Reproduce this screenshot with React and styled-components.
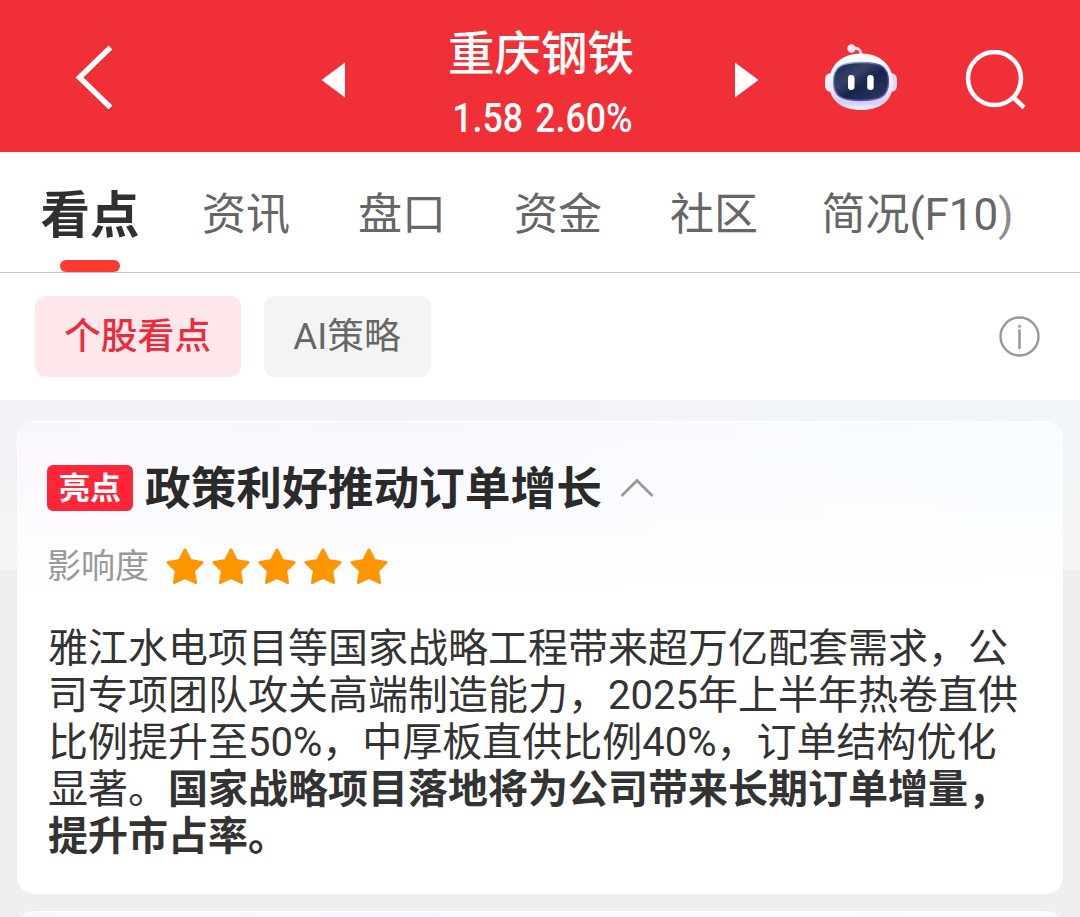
import React from "react";
import styled, { createGlobalStyle } from "styled-components";

const GlobalStyle = createGlobalStyle`
  * { box-sizing: border-box; }
  html, body { margin: 0; padding: 0; }
  body {
    width: 1080px;
    height: 917px;
    overflow: hidden;
    background: #efefef;
    font-family: Roboto, "Noto Sans CJK SC", sans-serif;
    color: #333;
  }
  svg { display: block; flex: none; }
`;

const Page = styled.div`
  width: 1080px;
  height: 917px;
  display: flex;
  flex-direction: column;
  overflow: hidden;
`;

const Header = styled.header`
  height: 152px;
  flex: none;
  display: grid;
  grid-template-columns: 321px 87px 266px 150px 141px 115px;
  background: #f12f37;
  color: #fff;
`;

const HeaderCell = styled.div`
  padding: ${(p) => p.$pad};
`;

const StockTitle = styled.div`
  display: flex;
  flex-direction: column;
  align-items: center;
  padding-top: 24px;
`;

const StockName = styled.div`
  font-size: 46.5px;
  line-height: 60px;
  font-weight: 500;
  white-space: nowrap;
`;

const StockQuote = styled.div`
  font-size: 40.5px;
  line-height: 48px;
  margin: 10px 0 0 2px;
  font-weight: 500;
  word-spacing: 4px;
  white-space: nowrap;
  transform: scaleX(0.88);
`;

const Percent = styled.span`
  font-size: 41px;
  font-weight: 500;
`;

const Tabs = styled.nav`
  height: 121px;
  flex: none;
  display: flex;
  padding-left: 40px;
  background: #fff;
  border-bottom: 1px solid #c8c8c8;
`;

const Tab = styled.div`
  display: flex;
  flex-direction: column;
  align-items: center;
  width: ${(p) => p.$width}px;
  margin-right: ${(p) => p.$gap}px;
  padding-top: ${(p) => (p.$active ? 34 : 33)}px;
  font-size: ${(p) => (p.$active ? 49.5 : 44)}px;
  font-weight: ${(p) => (p.$active ? 700 : 400)};
  line-height: 60px;
  color: ${(p) => (p.$active ? "#303030" : "#666")};
  white-space: nowrap;
`;

const Indicator = styled.span`
  width: 60px;
  height: 12px;
  margin-top: 14px;
  border-radius: 6px;
  background: #fb3a30;
`;

const FadedEnd = styled.span`
  color: #8c8c8c;
`;

const Filters = styled.div`
  height: 127px;
  flex: none;
  display: flex;
  align-items: flex-start;
  padding: 23px 40px 0 35px;
  background: #fff;
`;

const Chip = styled.div`
  width: ${(p) => p.$width}px;
  height: 81px;
  margin-right: 23px;
  padding-right: 1px;
  border-radius: 11px;
  font-size: 36.8px;
  line-height: 81px;
  text-align: center;
  white-space: nowrap;
  font-weight: ${(p) => (p.$active ? 500 : 400)};
  color: ${(p) => (p.$active ? "#ea2c3d" : "#666")};
  background: ${(p) => (p.$active ? "#ffe8eb" : "#f4f4f4")};
`;

const InfoButton = styled.div`
  margin: 20px 0 0 auto;
`;

const Feed = styled.main`
  flex: 1;
  padding: 21px 17px 0;
  background: linear-gradient(to bottom, rgba(239, 239, 239, 0), #f3f4f4 169px, #efefef 169px),
    linear-gradient(to right, #f2f2f8, #f2f3f8 50%, #f1f6f9);
`;

const Card = styled.article`
  height: 473px;
  margin-bottom: 17px;
  padding: 43px 30px 0;
  border: 1px solid #fff;
  border-radius: 17px;
  background: linear-gradient(to bottom, rgba(255, 255, 255, 0), #fff 180px),
    linear-gradient(to right, #fbf6fe, #f6f8ff 38%, #f8faff 65%, #f6fcff);
`;

const CardHead = styled.div`
  display: flex;
  align-items: center;
  height: 46px;
  margin-left: -1px;
`;

const Badge = styled.span`
  width: 86px;
  height: 46px;
  border-radius: 6px;
  background: #ff2639;
  color: #fff;
  font-size: 31px;
  font-weight: 700;
  line-height: 48px;
  text-align: center;
`;

const CardTitle = styled.h2`
  margin: 0 18px 0 12px;
  font-size: 45.7px;
  line-height: 46px;
  padding-top: 3px;
  font-weight: 700;
  color: #2a2a2a;
  white-space: nowrap;
`;

const Impact = styled.div`
  display: flex;
  align-items: center;
  height: 40px;
  margin: 35px 0 0 -1px;
`;

const ImpactLabel = styled.span`
  width: 119px;
  font-size: 34px;
  line-height: 40px;
  color: #999;
`;

const Stars = styled.div`
  display: flex;
  gap: 8px;
`;

const Body = styled.p`
  margin: 39px 0 0;
  font-size: 40px;
  line-height: 47px;
  color: #333;
  white-space: nowrap;
`;

const Line = styled.span`
  display: block;
`;

const BackIcon = () => (
  <svg width="40" height="68" viewBox="0 0 40 68" fill="none">
    <path d="M36.500 5 6 35l30.500 30.500" stroke="#8d1d24" strokeOpacity=".35" strokeWidth="5" />
    <path d="M36.500 3.500 5.500 33.500l31 30" stroke="#fff" strokeWidth="5.500" />
  </svg>
);

const PrevIcon = () => (
  <svg width="25" height="36" viewBox="0 0 25 36"><path d="M24 .5v35L.5 18z" fill="#fff" /></svg>
);

const NextIcon = () => (
  <svg width="25" height="36" viewBox="0 0 25 36"><path d="M1 .5v35L24.500 18z" fill="#fff" /></svg>
);

const RobotIcon = () => (
  <svg width="74" height="68" viewBox="0 0 74 68">
    <defs>
      <linearGradient id="shell" x1="0" y1="0" x2="0" y2="1">
        <stop offset="0" stopColor="#fff" />
        <stop offset=".55" stopColor="#efedfb" />
        <stop offset=".88" stopColor="#d3d1f2" />
        <stop offset="1" stopColor="#faf6fd" />
      </linearGradient>
      <linearGradient id="rim" x1="0" y1="0" x2="1" y2="1">
        <stop offset="0" stopColor="#8be0ee" />
        <stop offset=".45" stopColor="#6b4fc4" />
        <stop offset=".75" stopColor="#5a50d0" />
        <stop offset="1" stopColor="#b45ce0" />
      </linearGradient>
      <linearGradient id="face" x1="0" y1="0" x2="1" y2="1">
        <stop offset="0" stopColor="#1d2850" />
        <stop offset=".35" stopColor="#364165" />
        <stop offset=".55" stopColor="#18244b" />
        <stop offset="1" stopColor="#303b65" />
      </linearGradient>
    </defs>
    <path d="M28 4.500c6-1 9 1 9.200 7" fill="none" stroke="#efdcec" strokeWidth="3" />
    <circle cx="27.500" cy="4.500" r="4.200" fill="#f5e8f6" />
    <rect x="1" y="29" width="12" height="19" rx="6" fill="#f2edfb" />
    <rect x="61" y="29" width="12" height="19" rx="6" fill="#dcd9f7" />
    <path d="M37 9.500C56 9.500 69 21 69 39S56 66 37 66 5 57 5 39 18 9.500 37 9.500z" fill="url(#shell)" />
    <path d="M37 18.500c20 0 27.500 4 27.500 19s-8 19-27.500 19-27.500-4-27.500-19 7.500-19 27.500-19z" fill="url(#face)" stroke="url(#rim)" strokeWidth="1.300" />
    <rect x="24" y="31" width="6.500" height="15" rx="3.200" fill="#fff" />
    <rect x="43.200" y="31" width="6.500" height="15" rx="3.200" fill="#fff" />
  </svg>
);

const SearchIcon = () => (
  <svg width="62" height="62" viewBox="0 0 62 62" fill="none" stroke="#fff" strokeWidth="4.500">
    <circle cx="29.500" cy="28.500" r="26.500" />
    <path d="m48.500 47.500 10.500 10" />
  </svg>
);

const InfoIcon = () => (
  <svg width="41" height="41" viewBox="0 0 41 41" fill="none" stroke="#999">
    <circle cx="20.500" cy="20.500" r="19" strokeWidth="2.400" />
    <path d="M20.500 14.500V32" strokeWidth="2.600" strokeLinecap="round" />
    <circle cx="20.500" cy="10.200" r="1.500" fill="#999" stroke="none" />
  </svg>
);

const CollapseIcon = () => (
  <svg width="34" height="20" viewBox="0 0 34 20" fill="none">
    <path d="M1.500 18 17 2.500 32.500 18" stroke="#999" strokeWidth="2.800" />
  </svg>
);

const Star = () => (
  <svg width="38" height="37" viewBox="0 0 38 37">
    <path
      d="m19 2 5.300 10.500 11.700 1.900-8.400 8.400 1.900 11.700L19 29.300 8.500 34.500l1.900-11.700L2 14.400l11.700-1.900z"
      fill="#ff9500" stroke="#ff9500" strokeWidth="3" strokeLinejoin="round"
    />
  </svg>
);

export default function App() {
  return (
    <Page>
      <GlobalStyle />
      <Header>
        <HeaderCell $pad="44px 0 0 74px"><BackIcon /></HeaderCell>
        <HeaderCell $pad="62px 0 0 0"><PrevIcon /></HeaderCell>
        <StockTitle>
          <StockName>重庆钢铁</StockName>
          <StockQuote>1.58 2.60<Percent>%</Percent></StockQuote>
        </StockTitle>
        <HeaderCell $pad="62px 0 0 60px"><NextIcon /></HeaderCell>
        <HeaderCell $pad="44px 0 0 0"><RobotIcon /></HeaderCell>
        <HeaderCell $pad="50px 0 0 0"><SearchIcon /></HeaderCell>
      </Header>
      <Tabs>
        <Tab $active $width={100} $gap={62}>看点<Indicator /></Tab>
        <Tab $width={88} $gap={68}>资讯</Tab>
        <Tab $width={88} $gap={68}>盘口</Tab>
        <Tab $width={88} $gap={68}>资金</Tab>
        <Tab $width={88} $gap={63}>社区</Tab>
        <Tab $width={193} $gap={0}><span>简况(F10<FadedEnd>)</FadedEnd></span></Tab>
      </Tabs>
      <Filters>
        <Chip $active $width={206}>个股看点</Chip>
        <Chip $width={167}>AI策略</Chip>
        <InfoButton><InfoIcon /></InfoButton>
      </Filters>
      <Feed>
        <Card>
          <CardHead>
            <Badge>亮点</Badge>
            <CardTitle>政策利好推动订单增长</CardTitle>
            <CollapseIcon />
          </CardHead>
          <Impact>
            <ImpactLabel>影响度</ImpactLabel>
            <Stars>{[1, 2, 3, 4, 5].map((n) => <Star key={n} />)}</Stars>
          </Impact>
          <Body>
            <Line>雅江水电项目等国家战略工程带来超万亿配套需求，公</Line>
            <Line>司专项团队攻关高端制造能力，2025年上半年热卷直供</Line>
            <Line>比例提升至50%，中厚板直供比例40%，订单结构优化</Line>
            <Line>显著。<b>国家战略项目落地将为公司带来长期订单增量，</b></Line>
            <Line><b>提升市占率。</b></Line>
          </Body>
        </Card>
        <Card />
      </Feed>
    </Page>
  );
}
